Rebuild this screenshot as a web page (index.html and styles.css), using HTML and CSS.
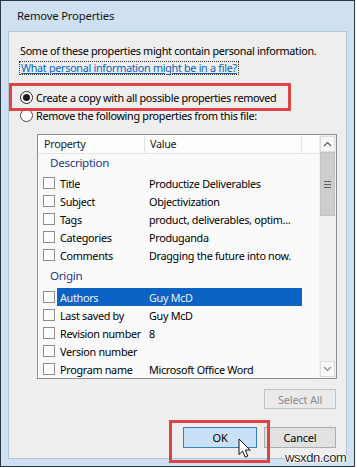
FILE: index.html
```html
<!DOCTYPE html>
<html>
<head>
<meta charset="utf-8">
<title>Remove Properties</title>
<link rel="stylesheet" href="styles.css">
</head>
<body>
<div class="window">
  <div class="titlebar">Remove Properties</div>
  <div class="content">
    <p class="intro">Some of these properties might contain personal information.</p>
    <div class="linkrow"><a class="link" href="#">What personal information might be in a file?</a></div>
    <div class="options">
      <div class="radio-row"><span class="radio checked"></span><span>Create a copy with all possible properties removed</span></div>
      <div class="radio-row"><span class="radio"></span><span>Remove the following properties from this file:</span></div>
    </div>
    <div class="listbox">
      <div class="list-main">
        <div class="list-header">
          <span class="hcol hprop">Property</span>
          <span class="hcol hval">Value</span>
          <span class="hcol hrest"></span>
        </div>
        <div class="group first">Description</div>
        <div class="row"><span class="check"></span><span class="cells"><span class="name">Title</span><span class="val">Productize Deliverables</span></span></div>
        <div class="row"><span class="check"></span><span class="cells"><span class="name">Subject</span><span class="val">Objectivization</span></span></div>
        <div class="row"><span class="check"></span><span class="cells"><span class="name">Tags</span><span class="val">product, deliverables, optim...</span></span></div>
        <div class="row"><span class="check"></span><span class="cells"><span class="name">Categories</span><span class="val">Produganda</span></span></div>
        <div class="row"><span class="check"></span><span class="cells"><span class="name">Comments</span><span class="val">Dragging the future into now.</span></span></div>
        <div class="group">Origin</div>
        <div class="row selected"><span class="check"></span><span class="cells"><span class="name">Authors</span><span class="val">Guy McD</span></span></div>
        <div class="row"><span class="check"></span><span class="cells"><span class="name">Last saved by</span><span class="val">Guy McD</span></span></div>
        <div class="row"><span class="check"></span><span class="cells"><span class="name">Revision number</span><span class="val">8</span></span></div>
        <div class="row"><span class="check"></span><span class="cells"><span class="name">Version number</span><span class="val"></span></span></div>
        <div class="row"><span class="check"></span><span class="cells"><span class="name">Program name</span><span class="val">Microsoft Office Word</span></span></div>
      </div>
      <div class="scrollbar">
        <div class="sbtn"><svg width="9" height="6" viewBox="0 0 9 6"><path d="M1 5 L4.5 1.5 L8 5" fill="none" stroke="#5a5a5a" stroke-width="1.2"/></svg></div>
        <div class="thumb"><span class="grip"></span></div>
        <div class="track"></div>
        <div class="sbtn"><svg width="9" height="6" viewBox="0 0 9 6"><path d="M1 1 L4.5 4.5 L8 1" fill="none" stroke="#8a8a8a" stroke-width="1.1"/></svg></div>
      </div>
    </div>
    <div class="select-row"><button class="btn disabled" type="button">Select All</button></div>
    <div class="button-row">
      <button class="btn primary" type="button">OK</button>
      <button class="btn cancel" type="button">Cancel</button>
    </div>
  </div>
  <div class="mark mark-copy"></div>
  <div class="mark mark-ok"></div>
  <svg class="cursor" width="14" height="21" viewBox="0 0 14 21"><path d="M1 1 L1 16.5 L4.6 13 L7.2 19.2 L9.8 18.1 L7.3 12.1 L12.2 12.1 Z" fill="#fff" stroke="#111" stroke-width="1" stroke-linejoin="round"/></svg>
  <div class="watermark">wsxdn.com</div>
</div>
</body>
</html>
```
FILE: styles.css
```css
* { box-sizing: border-box; }
html, body { margin: 0; padding: 0; background: #fff; }
body {
  width: 357px;
  height: 468px;
  overflow: hidden;
  font-family: "Noto Sans", "Open Sans", sans-serif;
  font-size: 10.8px;
  letter-spacing: -0.3px;
  color: #000;
}
.window {
  position: relative;
  width: 355px;
  height: 467px;
  border: 1px solid #2c3845;
  background: #cfe0f2;
  padding: 0 7px 7px;
  display: flex;
  flex-direction: column;
}
.titlebar {
  height: 30px;
  line-height: 30px;
  padding-left: 9px;
  font-size: 11.3px;
  letter-spacing: -0.2px;
  color: #141414;
}
.content {
  flex: 1;
  background: #eeeeee;
  border: 1px solid #b2c4d8;
  padding: 10px 10px 0 11px;
  display: flex;
  flex-direction: column;
}
.intro { margin: 0; line-height: 18px; height: 18px; white-space: nowrap; }
.linkrow { height: 18px; padding-top: 1px; display: flex; align-items: flex-start; }
.link {
  display: inline-block;
  line-height: 12px;
  height: 14px;
  border: 1px dotted #333;
  padding: 0 1px;
  margin-left: -1px;
  color: #0b5fb8;
  text-decoration: underline;
  white-space: nowrap;
}
.options { margin-top: 10px; display: flex; flex-direction: column; }
.radio-row { height: 18px; display: flex; align-items: center; white-space: nowrap; }
.radio {
  width: 13px;
  height: 13px;
  border: 1px solid #4a4a4a;
  border-radius: 50%;
  background: #fff;
  margin-right: 3px;
  display: flex;
  align-items: center;
  justify-content: center;
  flex: none;
}
.radio.checked { border-color: #222; }
.radio.checked::after {
  content: "";
  width: 7px;
  height: 7px;
  border-radius: 50%;
  background: #1a1a1a;
}
.listbox {
  margin-top: 10px;
  margin-left: 17px;
  width: 300px;
  height: 245px;
  border: 1px solid #8c8f94;
  background: #fafafa;
  display: flex;
  flex: none;
}
.list-main { width: 281px; overflow: hidden; display: flex; flex-direction: column; }
.list-header {
  height: 19px;
  flex: none;
  display: flex;
  border-bottom: 1px solid #e3e3e3;
  background: #fdfdfd;
  color: #1a1a1a;
}
.hcol { line-height: 18px; border-right: 1px solid #e3e3e3; }
.hprop { width: 107px; padding-left: 6px; }
.hval { width: 157px; padding-left: 5px; }
.hrest { flex: 1; border-right: none; }
.group {
  flex: none;
  height: 24px;
  padding: 3px 0 3px 12px;
  line-height: 18px;
  color: #1d3a8c;
  font-size: 11.6px;
}
.group.first { height: 20px; padding-top: 0; padding-bottom: 2px; }
.row { flex: none; height: 18px; display: flex; align-items: center; padding-left: 5px; white-space: nowrap; }
.check {
  width: 12px;
  height: 12px;
  border: 1px solid #8d8d8d;
  background: #fdfdfd;
  margin-right: 2px;
  flex: none;
}
.cells { width: 245px; height: 18px; display: flex; align-items: center; }
.name { width: 92px; padding-left: 3px; flex: none; }
.val { flex: 1; }
.row.selected .cells { background: #0c63c4; color: #e9f1fb; }
.scrollbar {
  width: 17px;
  display: flex;
  flex-direction: column;
  background: #f0f0f0;
  padding: 1px;
}
.sbtn {
  height: 16px;
  flex: none;
  border: 1px solid #dcdcdc;
  background: #f8f8f8;
  display: flex;
  align-items: center;
  justify-content: center;
}
.thumb {
  height: 64px;
  flex: none;
  background: #cdcdcd;
  border: 1px solid #c4c4c4;
  display: flex;
  align-items: center;
  justify-content: center;
}
.grip {
  width: 7px;
  height: 7px;
  border-top: 1px solid #606060;
  border-bottom: 1px solid #606060;
  position: relative;
}
.grip::after {
  content: "";
  position: absolute;
  left: 0;
  right: 0;
  top: 2px;
  border-top: 1px solid #606060;
}
.track { flex: 1; }
.select-row { margin-top: 10px; display: flex; justify-content: flex-end; }
.button-row { margin-top: 18px; display: flex; justify-content: flex-end; gap: 7px; }
.btn {
  font-family: inherit;
  font-size: 11px;
  letter-spacing: -0.2px;
  height: 21px;
  padding: 0;
  margin: 0;
  border: 1px solid #adadad;
  background: #e1e1e1;
  color: #000;
}
.btn.disabled { width: 72px; height: 20px; border-color: #c2c2c2; background: #eaeaea; color: #8a8a8a; }
.btn.primary { width: 74px; border-color: #3b7fc0; background: #c8e1f7; }
.btn.cancel { width: 72px; }
.mark {
  position: absolute;
  border: 3px solid #dd4444;
}
.mark-copy { left: 8px; top: 82px; width: 282px; height: 28px; }
.mark-ok { left: 168px; top: 419px; width: 101px; height: 43px; }
.cursor { position: absolute; left: 237px; top: 437px; }
.watermark {
  position: absolute;
  left: 284px;
  top: 450px;
  font-family: "Liberation Sans", Arial, sans-serif;
  font-size: 13px;
  line-height: 13px;
  letter-spacing: -0.4px;
  color: #262626;
  text-shadow: 0 0 1px #fff, 0 0 2px #fff, 1px 0 0 #fff, -1px 0 0 #fff, 0 1px 0 #fff, 0 -1px 0 #fff;
}
```
